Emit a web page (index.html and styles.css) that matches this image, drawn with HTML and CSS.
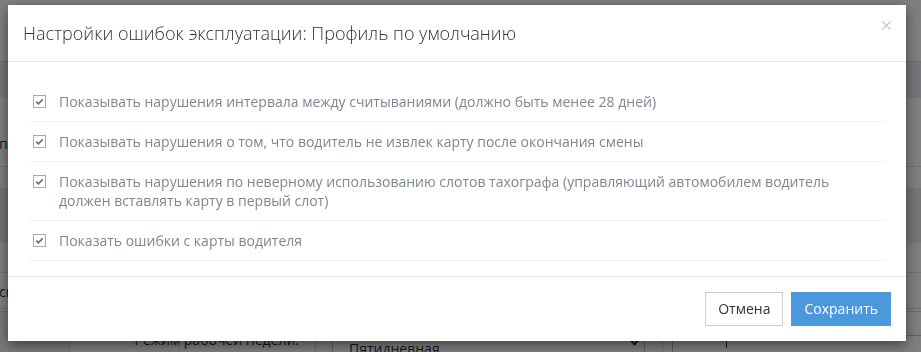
FILE: index.html
```html
<!DOCTYPE html>
<html lang="ru">
<head>
    <meta charset="UTF-8">
    <meta name="viewport" content="width=device-width, initial-scale=1.0">
    <title>Настройки ошибок эксплуатации</title>
    <link rel="stylesheet" href="styles.css">
</head>
<body>
    <!-- page behind the dialog -->
    <div class="page">
        <div class="bg-top"></div>
        <div class="bg-head"></div>
        <div class="bg-row bg-row-tall"><span class="bg-text">пл</span></div>
        <div class="bg-row bg-row-gap"></div>
        <div class="bg-row bg-row-shade"></div>
        <div class="bg-row bg-row-mid"></div>
        <div class="bg-row bg-row-text"><span class="bg-text">сн</span></div>
        <div class="bg-form">
            <div class="bg-cell bg-cell-side"></div>
            <div class="bg-cell bg-cell-label">Режим рабочей недели:</div>
            <div class="bg-cell bg-cell-select">
                <span>Пятидневная</span>
                <span class="bg-chevron"></span>
            </div>
            <div class="bg-cell bg-cell-gap"></div>
            <div class="bg-cell bg-cell-input"><span class="bg-caret"></span></div>
        </div>
    </div>

    <div class="overlay">
        <div class="modal">
            <div class="modal-header">
                <h4 class="modal-title">Настройки ошибок эксплуатации: Профиль по умолчанию</h4>
                <button type="button" class="close" aria-label="Закрыть">
                    <svg width="9" height="9" viewBox="0 0 9 9">
                        <path d="M0.5 0.5 L8.5 8.5 M8.5 0.5 L0.5 8.5" stroke="#c9c9c9" stroke-width="1.3" fill="none"/>
                    </svg>
                </button>
            </div>
            <div class="modal-body">
                <label class="check-row">
                    <span class="check"><svg width="13" height="13" viewBox="0 0 13 13"><path d="M3.2 6.6 L5.4 8.8 L9.8 4.4" stroke="#6f6f6f" stroke-width="1.7" fill="none"/></svg></span>
                    <span class="check-text">Показывать нарушения интервала между считываниями (должно быть менее 28 дней)</span>
                </label>
                <label class="check-row">
                    <span class="check"><svg width="13" height="13" viewBox="0 0 13 13"><path d="M3.2 6.6 L5.4 8.8 L9.8 4.4" stroke="#6f6f6f" stroke-width="1.7" fill="none"/></svg></span>
                    <span class="check-text">Показывать нарушения о том, что водитель не извлек карту после окончания смены</span>
                </label>
                <label class="check-row">
                    <span class="check"><svg width="13" height="13" viewBox="0 0 13 13"><path d="M3.2 6.6 L5.4 8.8 L9.8 4.4" stroke="#6f6f6f" stroke-width="1.7" fill="none"/></svg></span>
                    <span class="check-text">Показывать нарушения по неверному использованию слотов тахографа (управляющий автомобилем водитель должен вставлять карту в первый слот)</span>
                </label>
                <label class="check-row">
                    <span class="check"><svg width="13" height="13" viewBox="0 0 13 13"><path d="M3.2 6.6 L5.4 8.8 L9.8 4.4" stroke="#6f6f6f" stroke-width="1.7" fill="none"/></svg></span>
                    <span class="check-text">Показать ошибки с карты водителя</span>
                </label>
            </div>
            <div class="modal-footer">
                <button type="button" class="btn btn-default">Отмена</button>
                <button type="button" class="btn btn-primary">Сохранить</button>
            </div>
        </div>
    </div>
</body>
</html>
```

FILE: styles.css
```css
* {
    box-sizing: border-box;
}

html, body {
    margin: 0;
    height: 100%;
    overflow: hidden;
}

body {
    font-family: "Open Sans", "Noto Sans", sans-serif;
    background: #fff;
}

/* background page */
.page {
    height: 352px;
    overflow: hidden;
    color: #1f2f55;
    font-size: 14px;
}

.bg-top {
    height: 62px;
    border-bottom: 1px solid #dde2e8;
}

.bg-head {
    height: 36px;
    background: #e9edf2;
}

.bg-row {
    border-bottom: 1px solid #dde2e8;
}

.bg-row-tall {
    height: 69px;
    padding-top: 36px;
}

.bg-row-gap {
    height: 21px;
    border-bottom: none;
}

.bg-row-shade {
    height: 55px;
    background: #e6eaef;
    border-bottom: none;
}

.bg-row-mid {
    height: 30px;
}

.bg-row-text {
    height: 36px;
    padding-top: 9px;
}

.bg-text {
    display: inline-block;
    margin-left: -1px;
}

.bg-form {
    display: flex;
    height: 41px;
    margin-top: 2px;
    border-top: 1px solid #cfd5dd;
}

.bg-cell {
    height: 100%;
}

.bg-cell-side {
    width: 70px;
    background: #f1f3f5;
    border-right: 1px solid #d6dbe1;
}

.bg-cell-label {
    width: 246px;
    padding: 18px 16px 0 0;
    text-align: right;
    font-size: 14px;
    color: #1f2f55;
    border-right: 1px solid #d6dbe1;
}

.bg-cell-select {
    display: flex;
    justify-content: space-between;
    width: 313px;
    margin: 22px 0 0 16px;
    padding: 4px 6px 0 16px;
    border: 1px solid #b9c1cc;
    font-size: 14px;
    color: #1f2f55;
}

.bg-chevron {
    width: 7px;
    height: 7px;
    margin-top: -2px;
    border-right: 2px solid #333;
    border-bottom: 2px solid #333;
    transform: rotate(45deg);
}

.bg-cell-gap {
    width: 18px;
    border-right: 1px solid #d6dbe1;
}

.bg-cell-input {
    flex: 1;
    margin: 23px 0 0 9px;
    padding: 2px 0 0 53px;
    border-top: 1px solid #b9c1cc;
    border-left: 1px solid #b9c1cc;
}

.bg-caret {
    display: block;
    width: 1px;
    height: 10px;
    background: #333;
}

/* dim layer and dialog */
.overlay {
    position: fixed;
    inset: 0;
    background: rgba(0, 0, 0, 0.5);
}

.modal {
    width: 898px;
    margin: 5px 0 0 8px;
    background: #fff;
    box-shadow: 0 4px 12px rgba(0, 0, 0, 0.5);
}

.modal-header {
    display: flex;
    align-items: flex-start;
    padding: 15px;
    border-bottom: 1px solid #e5e5e5;
}

.modal-title {
    flex: 1;
    margin: 0;
    font-size: 18px;
    font-weight: 300;
    line-height: 26px;
    color: #333;
}

.close {
    margin-top: 1px;
    padding: 0;
    border: none;
    background: none;
    line-height: 0;
    cursor: pointer;
}

.modal-body {
    padding: 20px 20px 15px;
}

.check-row {
    display: flex;
    align-items: flex-start;
    padding: 10px 30px 10px 5px;
    border-bottom: 1px solid #f0f0f2;
    cursor: pointer;
}

.check {
    flex: none;
    width: 13px;
    height: 13px;
    margin: 3px 13px 0 0;
    border: 1px solid #a8a8a8;
    background: #fff;
    line-height: 0;
}

.check svg {
    margin: -1px 0 0 -1px;
}

.check-text {
    font-size: 14px;
    line-height: 19px;
    color: #7e8692;
}

.modal-footer {
    display: flex;
    justify-content: flex-end;
    gap: 8px;
    padding: 15px;
    border-top: 1px solid #e5e5e5;
}

.btn {
    height: 34px;
    padding: 6px 12px;
    font-family: inherit;
    font-size: 14px;
    line-height: 20px;
    border: 1px solid transparent;
    border-radius: 0;
    cursor: pointer;
}

.btn-default {
    background: #fff;
    border-color: #cccccc;
    color: #333;
}

.btn-primary {
    background: #4c98dd;
    border-color: #4c98dd;
    color: #fff;
}
```
